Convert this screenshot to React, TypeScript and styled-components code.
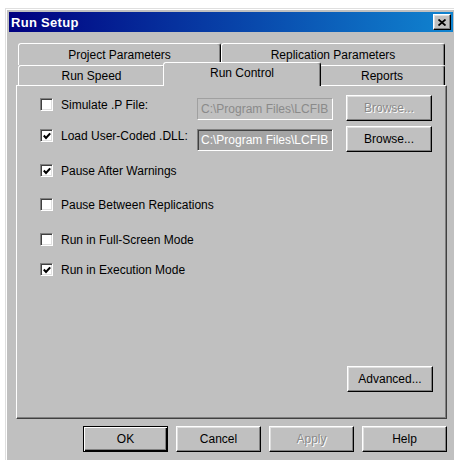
import styled, { createGlobalStyle, css } from "styled-components";

const GlobalStyle = createGlobalStyle`
  html, body {
    margin: 0;
    padding: 0;
    background: #ffffff;
    overflow: hidden;
  }
  body {
    font-family: "Liberation Sans", Arial, sans-serif;
    font-size: 12px;
    color: #000000;
  }
`;

const Dialog = styled.div`
  box-sizing: border-box;
  margin: 8px 0 0 5px;
  width: 452px;
  height: 460px;
  padding: 3px;
  background: #c0c0c0;
  border: 1px solid;
  border-color: #dfdfdf #000000 #000000 #dfdfdf;
  box-shadow: inset 1px 1px #ffffff, inset -1px -1px #808080;
`;

const TitleBar = styled.div`
  height: 20px;
  display: flex;
  align-items: center;
  justify-content: space-between;
  padding: 0 2px 0 2px;
  background: linear-gradient(to right, #000080, #1084d0);
`;

const TitleText = styled.span`
  color: #ffffff;
  font-weight: bold;
  font-size: 13px;
  letter-spacing: 0.3px;
`;

const CloseButton = styled.div`
  box-sizing: border-box;
  width: 18px;
  height: 16px;
  display: flex;
  align-items: center;
  justify-content: center;
  background: #c0c0c0;
  border: 1px solid;
  border-color: #ffffff #000000 #000000 #ffffff;
  box-shadow: inset -1px -1px #808080, inset 1px 1px #dfdfdf;
`;

const DialogBody = styled.div`
  padding: 11px 6px 0 7px;
`;

const TabStrip = styled.div`
  padding: 0 2px;
`;

const TabRow = styled.div<{ $h: number }>`
  display: flex;
  height: ${(p) => p.$h}px;
`;

const Tab = styled.div<{ $w: number; $active?: boolean }>`
  box-sizing: border-box;
  width: ${(p) => p.$w}px;
  height: 100%;
  display: flex;
  align-items: center;
  justify-content: center;
  background: #c0c0c0;
  border: 1px solid;
  border-bottom: none;
  border-color: #ffffff #000000 transparent #ffffff;
  border-radius: 3px 3px 0 0;
  box-shadow: inset -1px 0 #808080;
  white-space: nowrap;

  ${(p) =>
    p.$active &&
    css`
      position: relative;
      z-index: 1;
      width: ${p.$w + 4}px;
      height: calc(100% + 4px);
      margin: -3px -2px 0;
      padding-bottom: 3px;
    `}
`;

const Panel = styled.div`
  box-sizing: border-box;
  height: 334px;
  display: flex;
  flex-direction: column;
  padding: 12px 0 0 23px;
  border: 1px solid;
  border-color: #ffffff #404040 #404040 #ffffff;
  box-shadow: inset -1px -1px #808080;
`;

const FieldRow = styled.div<{ $top: number }>`
  display: grid;
  grid-template-columns: 144px 136px 86px;
  column-gap: 13px;
  align-items: start;
  margin-top: ${(p) => p.$top}px;
`;

const OptionRow = styled.div<{ $top: number }>`
  margin-top: ${(p) => p.$top}px;
`;

const CheckLabel = styled.label`
  display: flex;
  align-items: center;
  gap: 8px;
  height: 13px;
  white-space: nowrap;
`;

const Box = styled.span`
  box-sizing: border-box;
  width: 13px;
  height: 13px;
  flex: none;
  display: flex;
  align-items: center;
  justify-content: center;
  background: #ffffff;
  border: 1px solid;
  border-color: #808080 #ffffff #ffffff #808080;
  box-shadow: inset 1px 1px #404040, inset -1px -1px #dfdfdf;
`;

const PathField = styled.div<{ $enabled?: boolean }>`
  box-sizing: border-box;
  width: 136px;
  height: 22px;
  padding: 0 3px;
  display: flex;
  align-items: center;
  overflow: hidden;
  white-space: nowrap;
  border: 1px solid;
  border-color: #a0a0a0 #ffffff #ffffff #a0a0a0;
  background: #c0c0c0;
  color: #8a8a8a;

  ${(p) =>
    p.$enabled &&
    css`
      border-color: #808080 #ffffff #ffffff #808080;
      box-shadow: inset 1px 1px #404040;
      background: #a4a4a4;
      color: #ffffff;
    `}
`;

const Button = styled.button<{ $w: number; $default?: boolean }>`
  box-sizing: border-box;
  width: ${(p) => p.$w}px;
  height: 26px;
  padding: 0;
  font: inherit;
  color: #000000;
  background: #c0c0c0;
  border: 1px solid;
  border-color: #ffffff #000000 #000000 #ffffff;
  box-shadow: inset -1px -1px #808080, inset 1px 1px #dfdfdf;

  &:disabled {
    color: #8a8a8a;
    text-shadow: 1px 1px #ffffff;
  }

  ${(p) =>
    p.$default &&
    css`
      border-color: #000000;
      box-shadow: inset 1px 1px #ffffff, inset -1px -1px #000000,
        inset -2px -2px #808080;
    `}
`;

const FieldButton = styled(Button)`
  margin-top: -3px;
`;

const AdvancedButton = styled(Button)`
  margin: auto 13px 26px auto;
`;

const ButtonBar = styled.div`
  display: flex;
  justify-content: flex-end;
  gap: 8px;
  margin-top: 7px;
`;

const CheckMark = () => (
  <svg width="8" height="8" viewBox="0 0 8 8">
    <polyline
      points="0.8,3.6 3,5.9 7.2,1.4"
      fill="none"
      stroke="#000"
      strokeWidth="2.1"
    />
  </svg>
);

const CloseGlyph = () => (
  <svg width="8" height="7" viewBox="0 0 8 7">
    <path d="M0.5 0.5 L7.5 6.5 M7.5 0.5 L0.5 6.5" stroke="#000" strokeWidth="1.8" />
  </svg>
);

const Check = ({ checked, label }: { checked?: boolean; label: string }) => (
  <CheckLabel>
    <Box>{checked && <CheckMark />}</Box>
    <span>{label}</span>
  </CheckLabel>
);

const DLL_PATH = "C:\\Program Files\\LCFIB";

export default function App() {
  return (
    <>
      <GlobalStyle />
      <Dialog>
        <TitleBar>
          <TitleText>Run Setup</TitleText>
          <CloseButton>
            <CloseGlyph />
          </CloseButton>
        </TitleBar>

        <DialogBody>
          <TabStrip>
            <TabRow $h={22}>
              <Tab $w={203}>Project Parameters</Tab>
              <Tab $w={224}>Replication Parameters</Tab>
            </TabRow>
            <TabRow $h={20}>
              <Tab $w={147}>Run Speed</Tab>
              <Tab $w={154} $active>
                Run Control
              </Tab>
              <Tab $w={126}>Reports</Tab>
            </TabRow>
          </TabStrip>

          <Panel>
            <FieldRow $top={0}>
              <Check label="Simulate .P File:" />
              <PathField>{DLL_PATH}</PathField>
              <FieldButton $w={86} disabled>
                Browse...
              </FieldButton>
            </FieldRow>
            <FieldRow $top={8}>
              <Check checked label="Load User-Coded .DLL:" />
              <PathField $enabled>{DLL_PATH}</PathField>
              <FieldButton $w={86}>Browse...</FieldButton>
            </FieldRow>
            <OptionRow $top={12}>
              <Check checked label="Pause After Warnings" />
            </OptionRow>
            <OptionRow $top={21}>
              <Check label="Pause Between Replications" />
            </OptionRow>
            <OptionRow $top={22}>
              <Check label="Run in Full-Screen Mode" />
            </OptionRow>
            <OptionRow $top={17}>
              <Check checked label="Run in Execution Mode" />
            </OptionRow>

            <AdvancedButton $w={86}>Advanced...</AdvancedButton>
          </Panel>

          <ButtonBar>
            <Button $w={85} $default>
              OK
            </Button>
            <Button $w={85}>Cancel</Button>
            <Button $w={85} disabled>
              Apply
            </Button>
            <Button $w={85}>Help</Button>
          </ButtonBar>
        </DialogBody>
      </Dialog>
    </>
  );
}
